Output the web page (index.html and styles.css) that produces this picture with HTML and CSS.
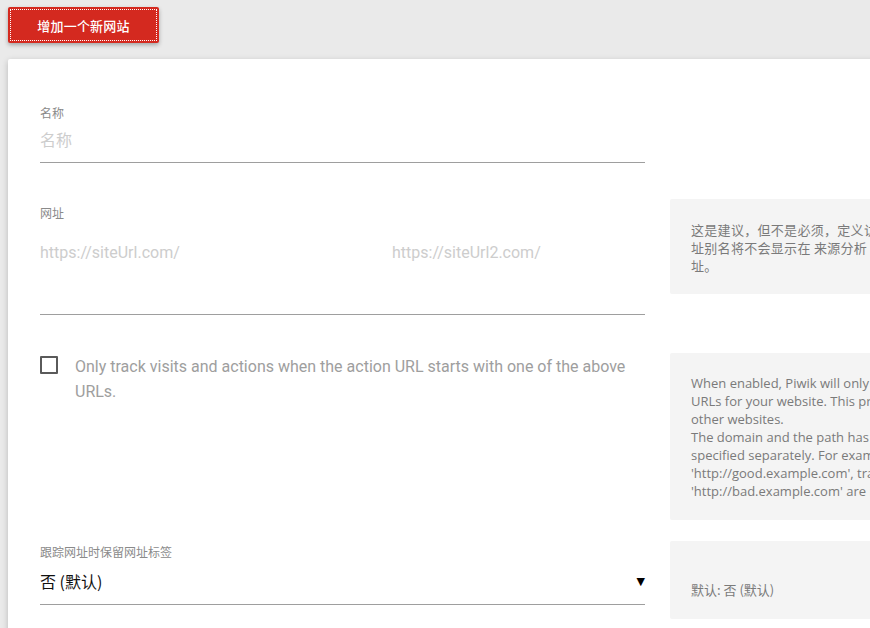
FILE: index.html
```html
<!DOCTYPE html>
<html lang="zh">
<head>
<meta charset="utf-8">
<title>增加一个新网站</title>
<link rel="stylesheet" href="styles.css">
</head>
<body>
<div class="page">
  <button class="btn-add" type="button"><span class="btn-focus">增加一个新网站</span></button>
  <div class="card">
    <div class="row row-name">
      <div class="field">
        <div class="label">名称</div>
        <div class="input"><span class="placeholder">名称</span></div>
      </div>
    </div>

    <div class="row row-urls">
      <div class="field">
        <div class="label">网址</div>
        <div class="textarea">
          <span class="placeholder url1">https://siteUrl.com/</span><span class="placeholder url2">https://siteUrl2.com/</span>
        </div>
      </div>
      <div class="help">
        <div class="line">这是建议，但不是必须，定义访客访问本网站的各种网址，每行一个。网</div>
        <div class="line">址别名将不会显示在 来源分析 &gt; 网站 报表中。注意，不需要同时指定带和不带的网</div>
        <div class="line">址。</div>
      </div>
    </div>

    <div class="row row-check">
      <div class="field check-field">
        <span class="checkbox"></span>
        <span class="check-label">Only track visits and actions when the action URL starts with one of the above URLs.</span>
      </div>
      <div class="help">
        <div class="line">When enabled, Piwik will only track internal actions when the Page URL is one of the known</div>
        <div class="line">URLs for your website. This prevents people from spamming your analytics with URLs for</div>
        <div class="line">other websites.</div>
        <div class="line">The domain and the path has to be an exact match and each valid subdomain has to be</div>
        <div class="line">specified separately. For example when the known URLs are 'http://example.com/path' and</div>
        <div class="line">'http://good.example.com', tracking requests for 'http://example.com/otherpath' or</div>
        <div class="line">'http://bad.example.com' are ignored.</div>
      </div>
    </div>

    <div class="row row-select">
      <div class="field">
        <div class="label">跟踪网址时保留网址标签</div>
        <div class="select"><span class="value">否 (默认)</span><span class="caret">▼</span></div>
      </div>
      <div class="help help-default">
        <div class="line empty"></div>
        <div class="line">默认: 否 (默认)</div>
      </div>
    </div>
  </div>
</div>
</body>
</html>
```

FILE: styles.css
```css
html, body {
  margin: 0;
  padding: 0;
  background: #eaeaea;
  overflow: hidden;
  height: 100%;
}
body {
  font-family: Roboto, "Noto Sans CJK SC", sans-serif;
}
.page {
  padding: 7px 0 0 8px;
  width: 1400px;
}
.btn-add {
  display: block;
  width: 151px;
  height: 36px;
  padding: 2px;
  margin: 0;
  border: none;
  background: #d4291f;
  border-radius: 2px;
  box-shadow: 0 2px 4px rgba(0,0,0,0.3);
  cursor: pointer;
}
.btn-focus {
  display: flex;
  align-items: center;
  justify-content: center;
  height: 100%;
  box-sizing: border-box;
  border: 1px dotted #fff;
  color: #fff;
  font-family: "Noto Sans CJK SC", sans-serif;
  font-size: 13px;
  font-weight: 500;
  letter-spacing: 0.2px;
}
.card {
  margin-top: 16px;
  background: #fff;
  width: 1300px;
  height: 700px;
  padding: 47px 0 0 32px;
  box-sizing: border-box;
  border-radius: 2px;
  box-shadow: 0 2px 6px rgba(0,0,0,0.22);
}
.row {
  display: flex;
  align-items: flex-start;
  gap: 25px;
}
.field {
  width: 605px;
  flex: none;
}
.label {
  font-family: "Noto Sans CJK SC", sans-serif;
  font-size: 12px;
  line-height: 14px;
  height: 14px;
  color: #8a8a8a;
}
.placeholder {
  color: #cdcdcd;
  font-size: 16px;
}
.input {
  height: 43px;
  box-sizing: border-box;
  border-bottom: 1px solid #9e9e9e;
  display: flex;
  align-items: center;
  padding-bottom: 4px;
}
.input .placeholder {
  font-family: "Noto Sans CJK SC", sans-serif;
  font-size: 16px;
}
.row-urls {
  margin-top: 36px;
}
.row-urls .field {
  padding-top: 7px;
}
.textarea {
  height: 95px;
  box-sizing: border-box;
  border-bottom: 1px solid #9e9e9e;
  padding-top: 23px;
  line-height: 20px;
  white-space: nowrap;
}
.url1 {
  display: inline-block;
  width: 352px;
}
.help {
  width: 640px;
  flex: none;
  background: #f4f4f4;
  border-radius: 2px;
  padding: 21px 21px 20px;
  box-sizing: border-box;
  color: #7a7a7a;
  font-family: "Open Sans", "Noto Sans CJK SC", sans-serif;
  font-size: 13px;
  line-height: 18px;
}
.help .line {
  white-space: nowrap;
  height: 18px;
}
.row-urls .help {
  padding-top: 22px;
  padding-bottom: 19px;
}
.row-urls .help .line {
  font-family: "Noto Sans CJK SC", sans-serif;
  letter-spacing: 0.3px;
}
.row-check {
  margin-top: 38px;
}
.check-field {
  display: flex;
  align-items: flex-start;
  padding-top: 3px;
}
.checkbox {
  flex: none;
  width: 18px;
  height: 18px;
  box-sizing: border-box;
  border: 2px solid #5a5a5a;
  border-radius: 1px;
  margin-right: 17px;
}
.check-label {
  color: #9e9e9e;
  font-size: 16px;
  line-height: 25px;
  margin-top: -2px;
  width: 560px;
}
.row-select {
  margin-top: 21px;
}
.row-select .field {
  padding-top: 4px;
}
.select {
  height: 46px;
  box-sizing: border-box;
  border-bottom: 1px solid #9e9e9e;
  display: flex;
  align-items: center;
  justify-content: space-between;
  padding-bottom: 1px;
}
.select .value {
  font-family: "Noto Sans CJK SC", sans-serif;
  font-size: 16px;
  color: #111;
}
.caret {
  font-size: 11px;
  color: #000;
  margin-right: 0;
  font-family: "DejaVu Sans", sans-serif;
}
.help-default {
  padding-top: 22px;
  padding-bottom: 20px;
  font-family: "Noto Sans CJK SC", sans-serif;
}
```
